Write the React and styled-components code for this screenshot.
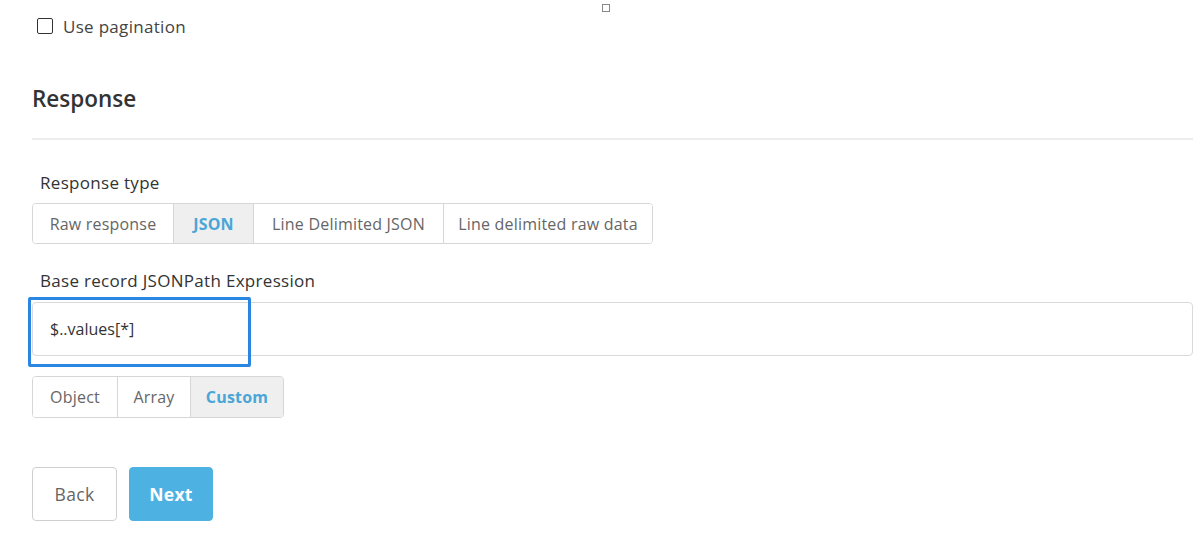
import React, { useState } from 'react';
import styled, { createGlobalStyle } from 'styled-components';

const GlobalStyle = createGlobalStyle`
  body {
    margin: 0;
    background: #fff;
    font-family: "Open Sans", Lato, Arial, sans-serif;
    color: #333;
  }
`;

const Page = styled.div`
  position: relative;
  padding: 0 7px 0 32px;
  width: 1200px;
  height: 557px;
  box-sizing: border-box;
  overflow: hidden;
`;

const Marker = styled.div`
  position: absolute;
  left: 602px;
  top: 4px;
  width: 6px;
  height: 6px;
  border: 1px solid #888;
`;

const CheckRow = styled.label`
  display: flex;
  align-items: center;
  gap: 10px;
  height: 26px;
  padding: 13px 0 0 5px;
  font-size: 17px;
  letter-spacing: 0.3px;
  color: #444;
`;

const CheckBox = styled.span`
  width: 14px;
  height: 14px;
  border: 1.6px solid #333;
  border-radius: 2px;
`;

const Heading = styled.h2`
  margin: 45px 0 0;
  font-size: 22.5px;
  font-weight: 600;
  line-height: 30px;
  color: #333;
`;

const Divider = styled.hr`
  margin: 24px 0 0;
  border: none;
  border-top: 2px solid #ececec;
`;

const FieldLabel = styled.div`
  padding-left: 8px;
  margin-top: ${({ top }) => top}px;
  font-size: 17px;
  letter-spacing: 0.3px;
  line-height: 24px;
  color: #333;
`;

const Group = styled.div`
  display: inline-flex;
  margin-top: ${({ top }) => top}px;
  border: 1px solid #d6d6d6;
  border-radius: 4px;
  overflow: hidden;
`;

const Segment = styled.button`
  box-sizing: border-box;
  height: ${({ h }) => h}px;
  width: ${({ w }) => w}px;
  padding: 0;
  border: none;
  border-left: 1px solid #d6d6d6;
  background: ${({ active }) => (active ? '#efefef' : '#fff')};
  color: ${({ active }) => (active ? '#4aa6d6' : '#666')};
  font-family: inherit;
  font-size: 16px;
  letter-spacing: 0.2px;
  font-weight: ${({ active }) => (active ? 700 : 400)};
  cursor: pointer;
  &:first-child {
    border-left: none;
  }
`;

const InputWrap = styled.div`
  position: relative;
  margin-top: 9px;
`;

const Input = styled.input`
  display: block;
  width: 100%;
  height: 54px;
  box-sizing: border-box;
  padding: 0 17px;
  border: 1px solid #d9d9d9;
  border-radius: 4px;
  font-family: inherit;
  font-size: 16px;
  color: #333;
  outline: none;
`;

const FocusHighlight = styled.div`
  position: absolute;
  left: -4px;
  top: -5px;
  width: 223px;
  height: 70px;
  box-sizing: border-box;
  border: 3px solid #2a86e0;
  border-radius: 2px;
  pointer-events: none;
`;

const Actions = styled.div`
  display: flex;
  gap: 12px;
  margin-top: 49px;
`;

const ActionButton = styled.button`
  height: 54px;
  width: ${({ w }) => w}px;
  border-radius: 4px;
  border: 1px solid ${({ primary }) => (primary ? '#4db1e1' : '#cfcfcf')};
  background: ${({ primary }) => (primary ? '#4db1e1' : '#fff')};
  color: ${({ primary }) => (primary ? '#fff' : '#666')};
  font-family: inherit;
  font-size: 17.5px;
  letter-spacing: 0.3px;
  font-weight: ${({ primary }) => (primary ? 700 : 400)};
  cursor: pointer;
`;

const responseTypes = [
  { label: 'Raw response', w: 140 },
  { label: 'JSON', w: 80 },
  { label: 'Line Delimited JSON', w: 190 },
  { label: 'Line delimited raw data', w: 209 },
];

const recordTypes = [
  { label: 'Object', w: 84 },
  { label: 'Array', w: 73 },
  { label: 'Custom', w: 93 },
];

export default function App() {
  const [type, setType] = useState('JSON');
  const [record, setRecord] = useState('Custom');
  const [path, setPath] = useState('$..values[*]');

  return (
    <Page>
      <GlobalStyle />
      <Marker />
      <CheckRow>
        <CheckBox />
        Use pagination
      </CheckRow>

      <Heading>Response</Heading>
      <Divider />

      <FieldLabel top={31}>Response type</FieldLabel>
      <Group top={8}>
        {responseTypes.map((t) => (
          <Segment
            key={t.label}
            h={39}
            w={t.w}
            active={type === t.label}
            onClick={() => setType(t.label)}
          >
            {t.label}
          </Segment>
        ))}
      </Group>

      <FieldLabel top={25}>Base record JSONPath Expression</FieldLabel>
      <InputWrap>
        <Input value={path} onChange={(e) => setPath(e.target.value)} />
        <FocusHighlight />
      </InputWrap>

      <Group top={20}>
        {recordTypes.map((t) => (
          <Segment
            key={t.label}
            h={40}
            w={t.w}
            active={record === t.label}
            onClick={() => setRecord(t.label)}
          >
            {t.label}
          </Segment>
        ))}
      </Group>

      <Actions>
        <ActionButton w={85}>Back</ActionButton>
        <ActionButton w={84} primary>
          Next
        </ActionButton>
      </Actions>
    </Page>
  );
}
